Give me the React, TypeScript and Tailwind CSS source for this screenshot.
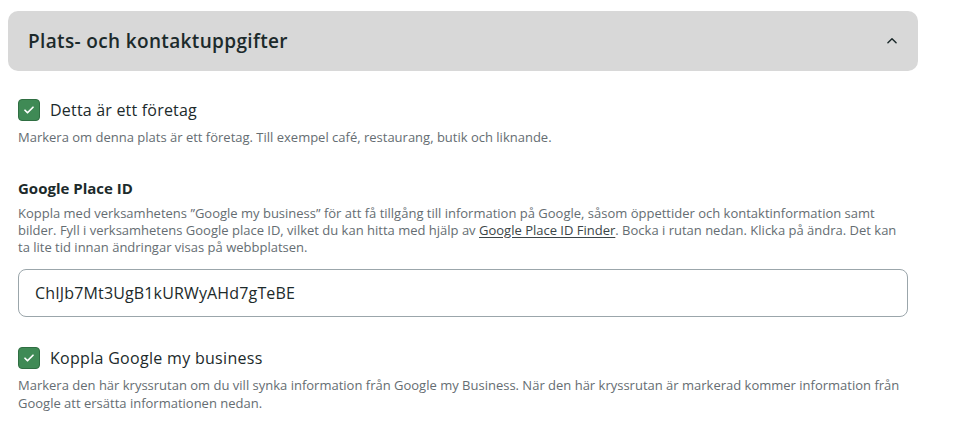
import React from "react";

function Check() {
  return (
    <span className="flex h-[22px] w-[22px] shrink-0 items-center justify-center rounded-[4px] border border-[#2f6e42] bg-[#3f8a55]">
      <svg width="12" height="12" viewBox="0 0 24 24" fill="none" stroke="white" strokeWidth="3.5" strokeLinecap="round" strokeLinejoin="round">
        <path d="M4 12.5l5 5L20 6.5" />
      </svg>
    </span>
  );
}

export default function App() {
  return (
    <div className="min-h-[444px] w-[960px] bg-white px-2 pt-[11px] text-[#1c2a2b]" style={{ fontFamily: '"Open Sans", sans-serif' }}>
      <div className="flex h-[60px] w-[910px] items-center justify-between rounded-[10px] bg-[#d8d8d8] pl-5 pr-[19px]">
        <h2 className="text-[19px] font-semibold tracking-[0.35px]">Plats- och kontaktuppgifter</h2>
        <svg width="14" height="14" viewBox="0 0 24 24" fill="none" stroke="#1c2a2b" strokeWidth="2.5" strokeLinecap="round" strokeLinejoin="round">
          <path d="M5 15l7-7 7 7" />
        </svg>
      </div>
      <div className="w-[890px] px-[10px] box-content">
        <div className="mt-[27px] flex items-center gap-[10px]">
          <Check />
          <span className="text-[16px] font-medium tracking-[0.2px]">Detta är ett företag</span>
        </div>
        <p className="mt-[6px] text-[13px] leading-[18px] text-[#656d72]">
          Markera om denna plats är ett företag. Till exempel café, restaurang, butik och liknande.
        </p>
        <h3 className="mt-[31px] text-[15px] font-bold">Google Place ID</h3>
        <p className="mt-[5px] text-[13px] leading-[17px] text-[#656d72]">
          Koppla med verksamhetens ”Google my business” för att få tillgång till information på Google, såsom öppettider och kontaktinformation samt bilder. Fyll i verksamhetens Google place ID, vilket du kan hitta med hjälp av{" "}
          <a className="text-[#3c4548] underline underline-offset-2">Google Place ID Finder</a>. Bocka i rutan nedan. Klicka på ändra. Det kan ta lite tid innan ändringar visas på webbplatsen.
        </p>
        <div className="mt-[13px] flex h-[48px] items-center rounded-[8px] border border-[#9ba6ab] px-4 text-[16px] tracking-[0.15px]">
          ChIJb7Mt3UgB1kURWyAHd7gTeBE
        </div>
        <div className="mt-[29px] flex items-center gap-[10px]">
          <Check />
          <span className="text-[16px] font-medium tracking-[0.3px]">Koppla Google my business</span>
        </div>
        <p className="mt-[6px] text-[13px] leading-[18px] text-[#656d72]">
          Markera den här kryssrutan om du vill synka information från Google my Business. När den här kryssrutan är markerad kommer information från Google att ersätta informationen nedan.
        </p>
      </div>
    </div>
  );
}
